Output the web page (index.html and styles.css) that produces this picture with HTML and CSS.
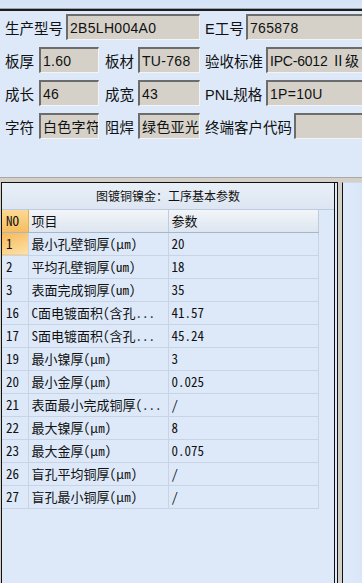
FILE: index.html
```html
<!DOCTYPE html>
<html lang="zh-CN">
<head>
  <meta charset="UTF-8">
  <title>工序基本参数</title>
  <link rel="stylesheet" href="styles.css">
</head>
<body>
  <div class="topbar"></div>

  <div class="form">
    <div class="row">
      <label class="lbl w61">生产型号</label>
      <div class="field w134">2B5LH004A0</div>
      <label class="lbl w41">E工号</label>
      <div class="field grow">765878</div>
    </div>
    <div class="row">
      <label class="lbl w34">板厚</label>
      <div class="field w60">1.60</div>
      <label class="lbl w33">板材</label>
      <div class="field w62">TU-768</div>
      <label class="lbl w61">验收标准</label>
      <div class="field grow tight">IPC-6012 Ⅱ级</div>
    </div>
    <div class="row">
      <label class="lbl w34">成长</label>
      <div class="field w60">46</div>
      <label class="lbl w33">成宽</label>
      <div class="field w62">43</div>
      <label class="lbl w61">PNL规格</label>
      <div class="field grow">1P=10U</div>
    </div>
    <div class="row">
      <label class="lbl w34">字符</label>
      <div class="field w60">白色字符</div>
      <label class="lbl w33">阻焊</label>
      <div class="field w62">绿色亚光</div>
      <label class="lbl w89">终端客户代码</label>
      <div class="field grow"></div>
    </div>
  </div>

  <div class="lower">
    <div class="panel">
      <div class="grid-box">
        <div class="grid-title">图镀铜镍金：工序基本参数</div>
        <table class="grid">
          <thead>
            <tr>
              <th class="no">NO</th>
              <th class="item">项目</th>
              <th class="val">参数</th>
            </tr>
          </thead>
          <tbody>
            <tr><td class="no current">1</td><td>最小孔壁铜厚(μm)</td><td>20</td></tr>
            <tr><td class="no">2</td><td>平均孔壁铜厚(um)</td><td>18</td></tr>
            <tr><td class="no">3</td><td>表面完成铜厚(um)</td><td>35</td></tr>
            <tr><td class="no">16</td><td>C面电镀面积(含孔...</td><td>41.57</td></tr>
            <tr><td class="no">17</td><td>S面电镀面积(含孔...</td><td>45.24</td></tr>
            <tr><td class="no">19</td><td>最小镍厚(μm)</td><td>3</td></tr>
            <tr><td class="no">20</td><td>最小金厚(μm)</td><td>0.025</td></tr>
            <tr><td class="no">21</td><td>表面最小完成铜厚(...</td><td>/</td></tr>
            <tr><td class="no">22</td><td>最大镍厚(μm)</td><td>8</td></tr>
            <tr><td class="no">23</td><td>最大金厚(μm)</td><td>0.075</td></tr>
            <tr><td class="no">26</td><td>盲孔平均铜厚(μm)</td><td>/</td></tr>
            <tr><td class="no">27</td><td>盲孔最小铜厚(μm)</td><td>/</td></tr>
          </tbody>
        </table>
      </div>
    </div>
    <div class="splitter"></div>
    <div class="side"></div>
  </div>
</body>
</html>
```

FILE: styles.css
```css
/* Reset */
* {
  box-sizing: border-box;
  margin: 0;
  padding: 0;
}
html, body {
  height: 100%;
}
body {
  display: flex;
  flex-direction: column;
  overflow: hidden;
  background-color: #dde9f9;
  color: #000;
  font-family: "Liberation Sans", "Noto Sans CJK SC", sans-serif;
}

/* Top strip */
.topbar {
  height: 11px;
  background: linear-gradient(#d3e2f5, #dae7f7);
  border-bottom: 2px solid #1c1c1c;
  box-shadow: 0 -1px 0 #9aa4b0 inset;
}

/* Header form */
.form {
  padding: 3px 0 0 5px;
  display: flex;
  flex-direction: column;
  gap: 7px;
}
.row {
  display: flex;
  align-items: center;
  height: 26px;
}
.lbl {
  flex: none;
  font-size: 14.5px;
  white-space: nowrap;
  color: #111;
}
.field {
  flex: none;
  height: 26px;
  padding: 3px 0 0 2px;
  background-color: #d5d1c9;
  border-top: 2px solid #6c6c6c;
  border-left: 2px solid #6c6c6c;
  border-right: 1px solid #f4f4f4;
  border-bottom: 1px solid #f4f4f4;
  font-size: 14px;
  letter-spacing: 0.3px;
  line-height: 18px;
  white-space: nowrap;
  overflow: hidden;
  color: #111;
}
.field.tight { letter-spacing: -0.2px; }
.grow { flex: 1; margin-right: -8px; }
.w33 { width: 33px; }
.w34 { width: 34px; }
.w41 { width: 41px; }
.w60 { width: 60px; margin-right: 6px; }
.w61 { width: 61px; }
.w62 { width: 62px; margin-right: 5px; }
.w89 { width: 89px; }
.w134 { width: 134px; margin-right: 5px; }

/* Lower area */
.lower {
  flex: 1;
  display: flex;
  margin-top: 38px;
  padding-left: 1px;
  border-top: 1px solid #a8a8a8;
  background-color: #d4d0c8;
  padding-top: 4px;
}
.panel {
  width: 337px;
  display: flex;
  border: 1px solid #111;
  border-bottom: none;
  padding-right: 2px;
  background-color: #dde9f9;
}
.grid-box {
  flex: 1;
  border-right: 1px solid #111;
  background-color: #dde9f9;
}
.grid-title {
  height: 27px;
  line-height: 26px;
  text-align: center;
  font-family: "Noto Sans CJK SC", sans-serif;
  font-size: 12px;
  color: #111;
  background: linear-gradient(#e9eff7, #dce6f2);
  border-bottom: 1px solid #bccbdd;
}
.splitter {
  width: 4px;
}
.side {
  flex: 1;
  border-left: 1px solid #111;
  border-top: 1px solid #cfd9e6;
  background: linear-gradient(90deg, #dfebfb, #d9e6f8);
}

/* Grid */
.grid {
  border-collapse: collapse;
  font-family: "Noto Sans Mono CJK SC", "Noto Sans CJK SC", monospace;
  font-size: 13px;
  color: #111;
}
.grid th {
  height: 22px;
  padding: 0 0 0 3px;
  text-align: left;
  font-weight: normal;
  background: linear-gradient(#f2f5f9, #dde5ef);
  border-right: 1px solid #c0ccdb;
  border-bottom: 1px solid #a7b7cb;
}
.grid th.no {
  background: linear-gradient(#fcd995, #f6bd5f);
  border-right: 1px solid #dfae5c;
}
.grid td {
  height: 23px;
  padding: 0 0 0 3px;
  white-space: nowrap;
  border-right: 1px solid #c8d4e3;
  border-bottom: 1px solid #c8d4e3;
}
.grid .no { width: 26px; padding-left: 4px; }
.grid .item { width: 140px; }
.grid .val { width: 150px; }
.grid td.current {
  background: linear-gradient(160deg, #f6b757, #fde3a8);
}
```
